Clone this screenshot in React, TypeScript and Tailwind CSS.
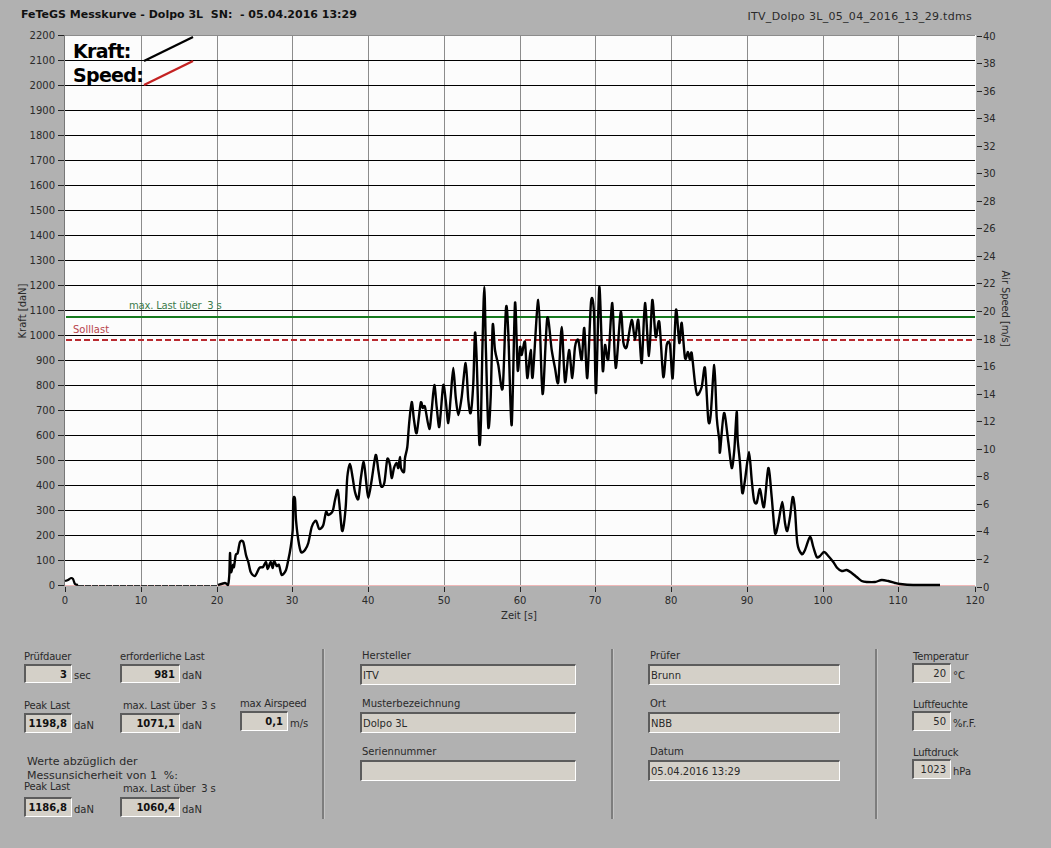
import React from "react";

const curveStart: [number, number][] = [[65,581],[68,580],[71,578],[73,579],[75,584],[78,585]];
const curve: [number, number][] = [
  [218,585],[225,583],[228,585],[229.3,575],[230,553],[231,572],[233,565],[234,567],[235.7,555],[237.7,553],[240,542],[243.3,542],[246,555],[248.3,562],[250.7,572],[255,576],[259.3,568],[263,567],[266,562],[267.7,569],[270.7,562],[272.7,568],[274,561],[276.7,566],[279,565],[281.7,575],[286,570],[288.3,560],[290.7,547],[292.7,530],[293.3,500],[295,499],[296,520],[298.3,540],[301,552],[305,550],[308.3,543],[311.7,527],[315,521],[316.7,522],[319.3,529],[323.3,525],[326,512],[328.3,515],[332.7,511],[335,500],[337.7,490],[339.3,503],[341.7,529],[343.3,528],[345.7,507],[347.3,477],[350,464],[352.7,478],[355,492],[358.3,499],[361,477],[363.7,462],[366,480],[368.3,498],[371.7,480],[375.7,455],[378.3,470],[381,486],[384.3,483],[387.3,459],[390,465],[391.7,478],[394,468],[396.7,463],[398.3,468],[400,457],[401,468],[404,472],[405,458],[407.3,447],[409,425],[411.7,402],[414,420],[416.7,433],[420.7,403],[422.7,408],[425,407],[429.3,429],[431.7,410],[434.3,385],[436.7,407],[439,427],[440.7,413],[443.3,385],[445.7,400],[448.3,423],[450.7,397],[453.3,368],[455.7,397],[458.3,415],[461.7,397],[465.7,363],[468.3,400],[470.7,413],
  [473.3,383],[475,333],[476.7,360],[479.3,443],[481,420],[482.3,353],[484.3,287],[486,353],[488.3,427],[490.7,397],[492.7,325],[495,350],[498.3,365],[502.7,388],[506,308],[508.3,333],[511.7,425],[515,303],[517.7,370],[520,347],[521.7,355],[525,342],[527.3,378],[530.7,350],[532.7,377],[538.3,300],[541.7,380],[543.3,390],[547.3,318],[551.7,350],[555,368],[558.3,382],[561.7,327],[565,382],[569,350],[572.3,378],[575,347],[578.3,340],[581.7,360],[584.3,328],[587.3,378],[591,302],[594,313],[596,393],[599.3,287],[602.7,370],[605,345],[608.3,359],[612.3,303],[615.7,368],[620.7,312],[623.3,342],[626.7,347],[631.7,320],[635,340],[638.3,320],[641.7,363],[645,303],[649,356],[652.3,300],[655.7,337],[659.3,322],[663.3,377],[666.7,345],[670,345],[672.7,378],[676,310],[679.3,343],[681.7,323],[685,358],[688,352],[690,360],[691.7,353],[695,383],[697.3,395],[701.7,387],[705,368],[708.3,420],[710.7,415],[714.3,365],[716.7,417],[719.3,440],[720,452],[724,413],[728.3,442],[731.7,468],[734.3,450],[736.7,412],[737.7,440],[740,463],[742.3,493],[745,480],[749,452],[751.7,480],[754,500],[756.7,503],[760,489],[764,507],[768.3,468],[771.7,497],[775,533],[778.3,523],[782.3,502],[785,523],[787.3,531],[790,517],[792.7,497],[795,510],[797.3,543],[801.7,554],[805,550],[810,537],[813.3,547],[816.7,557],[820,556],[824,552],[828.3,556],[833.3,562],[837.3,568],[841.7,571],[846.7,570],[851.7,573],[856.7,577],[861.7,581],[866.7,582],[875,582],[881.7,580],[888.3,581],[895,583],[900,584],[913,585],[940,585],
];

function smoothPath(pts: [number, number][]) {
  let d = `M${pts[0][0]} ${pts[0][1]}`;
  const k = 0.14;
  for (let i = 0; i < pts.length - 1; i++) {
    const p0 = pts[Math.max(0, i - 1)];
    const p1 = pts[i];
    const p2 = pts[i + 1];
    const p3 = pts[Math.min(pts.length - 1, i + 2)];
    const c1x = p1[0] + (p2[0] - p0[0]) * k;
    const c1y = p1[1] + (p2[1] - p0[1]) * k;
    const c2x = p2[0] - (p3[0] - p1[0]) * k;
    const c2y = p2[1] - (p3[1] - p1[1]) * k;
    d += `C${c1x.toFixed(1)} ${Math.min(585, c1y).toFixed(1)} ${c2x.toFixed(1)} ${Math.min(585, c2y).toFixed(1)} ${p2[0]} ${p2[1]}`;
  }
  return d;
}

const gridX = [141, 217, 292, 368, 444, 520, 595, 671, 747, 823, 898];
const hLines = Array.from({ length: 23 }, (_, i) => 35 + i * 25);
const rightTicks = Array.from({ length: 21 }, (_, i) => ({ v: 40 - i * 2, y: 35.5 + i * 27.55 }));
const xTicks = [65, ...gridX, 975];

function Chart() {
  return (
    <svg width={1051} height={621} viewBox="0 28 1051 621" className="block text-[10px] fill-[#2a2a2a]">
      <rect x={64} y={35} width={912} height={551} className="fill-[#fcfcfc]" />
      {gridX.map((x) => (
        <line key={x} x1={x + 0.5} x2={x + 0.5} y1={35} y2={586} className="stroke-[#8c8c8c]" strokeWidth={1} />
      ))}
      {hLines.map((y, i) => (
        <line key={y} x1={64} x2={975} y1={y + 0.5} y2={y + 0.5} className={i === 0 ? "stroke-[#8c8c8c]" : i === 22 ? "stroke-[#f0b8b8]" : "stroke-[#000000]"} strokeWidth={1} />
      ))}
      <line x1={64.5} x2={64.5} y1={35} y2={586} className="stroke-[#777777]" strokeWidth={1} />
      {hLines.map((y, i) => (
        <g key={y}>
          <line x1={58} x2={64} y1={y + 0.5} y2={y + 0.5} className="stroke-[#222222]" strokeWidth={1} />
          <text x={55} y={y + 4} textAnchor="end">{2200 - i * 100}</text>
        </g>
      ))}
      {rightTicks.map((t) => (
        <g key={t.v}>
          <line x1={977} x2={982} y1={Math.round(t.y) + 0.5} y2={Math.round(t.y) + 0.5} className="stroke-[#222222]" strokeWidth={1} />
          <text x={983} y={Math.round(t.y) + 4}>{t.v}</text>
        </g>
      ))}
      {xTicks.map((x, i) => (
        <g key={x}>
          <line x1={x + 0.5} x2={x + 0.5} y1={587} y2={592} className="stroke-[#222222]" strokeWidth={1} />
          <text x={x} y={604} textAnchor="middle">{i * 10}</text>
        </g>
      ))}
      <text x={519} y={619} textAnchor="middle">Zeit [s]</text>
      <text transform="translate(26 311) rotate(-90)" textAnchor="middle">Kraft [daN]</text>
      <text transform="translate(1002 308.5) rotate(90)" textAnchor="middle" className="tracking-[-0.1px]">Air Speed [m/s]</text>

      <line x1={66} x2={975} y1={317} y2={317} className="stroke-[#157a1e]" strokeWidth={2} />
      <line x1={66} x2={975} y1={340} y2={340} className="stroke-[#b92a30]" strokeWidth={2} strokeDasharray="6 3" />
      <text x={129} y={309} className="fill-[#3d7d4c] whitespace-pre tracking-[-0.2px]">max. Last über  3 s</text>
      <text x={73} y={333} className="fill-[#b8444c]">Solllast</text>
      <path d={smoothPath(curveStart)} fill="none" className="stroke-[#000000]" strokeWidth={2.2} strokeLinejoin="round" />
      <line x1={78} x2={218} y1={585.5} y2={585.5} className="stroke-[#333333]" strokeWidth={1} strokeDasharray="6 1" />
      <path d={smoothPath(curve)} fill="none" className="stroke-[#000000]" strokeWidth={2.4} strokeLinejoin="round" />

      <text x={73} y={58} className="text-[19px] font-bold fill-[#000000] tracking-[-0.7px]">Kraft:</text>
      <text x={73} y={82} className="text-[19px] font-bold fill-[#000000] tracking-[-0.7px]">Speed:</text>
      <line x1={144} y1={61} x2={193} y2={37} className="stroke-[#000000]" strokeWidth={2.4} />
      <line x1={144} y1={85} x2={193} y2={61} className="stroke-[#c42222]" strokeWidth={2.4} />
    </svg>
  );
}

const box = "border-t-2 border-l-2 border-b border-r border-t-[#5c5c5c] border-l-[#5c5c5c] border-b-[#ffffff] border-r-[#ffffff] bg-[#d4d0c8]";

function Num({ label, value, unit, w, labelClass = "", h = "h-[20px]", bold = true }: { label: string; value: string; unit?: string; w: string; labelClass?: string; h?: string; bold?: boolean }) {
  return (
    <div className="flex flex-col">
      <div className={`h-[14px] leading-[13px] whitespace-pre tracking-[-0.2px] ${labelClass}`}>{label}</div>
      <div className="flex items-end">
        <div className={`${box} ${w} ${h} flex items-center justify-end pr-[4px] ${bold ? "font-bold text-[#111111]" : ""}`}>{value}</div>
        {unit && <span className="ml-[2px] leading-[15px] whitespace-pre">{unit}</span>}
      </div>
    </div>
  );
}

function TextField({ label, value, w }: { label: string; value: string; w: string }) {
  return (
    <div className="flex flex-col">
      <div className="h-[15px] leading-[13px] pl-[2px]">{label}</div>
      <div className={`${box} ${w} h-[21px] flex items-center pl-[1px]`}>{value}</div>
    </div>
  );
}

function Sep() {
  return <div className="w-[3px] shrink-0 bg-[#7d7d7d] border-r border-r-[#c4c4c4]" />;
}

const env = "pl-[1px] translate-y-[1px]";

export default function App() {
  return (
    <div className="w-[1051px] h-[848px] overflow-hidden bg-[#b1b1b1] font-['DejaVu_Sans',sans-serif] text-[10px] text-[#2a2a2a]">
      <div className="h-[28px] flex justify-between pl-[21px] pr-[79px]">
        <div className="pt-[8px] font-bold text-[#111111] whitespace-pre leading-[14px] text-[11px]">FeTeGS Messkurve - Dolpo 3L  SN:  - 05.04.2016 13:29</div>
        <div className="pt-[10px] whitespace-pre leading-[14px] text-[11px] tracking-[0.3px]">ITV_Dolpo 3L_05_04_2016_13_29.tdms</div>
      </div>
      <Chart />
      <div className="flex h-[170px]">
        <div className="w-[322px] shrink-0 pl-[24px] pt-[1px] flex flex-col">
          <div className="flex">
            <div className="w-[96px]"><Num label="Prüfdauer" value="3" unit="sec" w="w-[48px]" h="h-[19px]" /></div>
            <Num label="erforderliche Last" value="981" unit="daN" w="w-[60px]" h="h-[19px]" />
          </div>
          <div className="flex items-end mt-[14px]">
            <div className="w-[96px]"><Num label="Peak Last" value="1198,8" unit="daN" w="w-[48px]" /></div>
            <div className="w-[120px]"><Num label="max. Last über  3 s" value="1071,1" unit="daN" w="w-[60px]" labelClass="pl-[3px]" /></div>
            <div className="mb-[2px]"><Num label="max Airspeed" value="0,1" unit="m/s" w="w-[48px]" /></div>
          </div>
          <div className="mt-[22px] pl-[3px] text-[11px] leading-[14px]">
            <div>Werte abzüglich der</div>
            <div className="whitespace-pre">Messunsicherheit von 1  %:</div>
          </div>
          <div className="flex">
            <div className="w-[96px]"><Num label="Peak Last" value="1186,8" unit="daN" w="w-[48px]" labelClass="-translate-y-[3px]" /></div>
            <Num label="max. Last über  3 s" value="1060,4" unit="daN" w="w-[60px]" labelClass="pl-[3px] -translate-y-[1px]" />
          </div>
        </div>
        <Sep />
        <div className="w-[286px] shrink-0 pl-[35px] flex flex-col gap-[12px]">
          <TextField label="Hersteller" value="ITV" w="w-[216px]" />
          <TextField label="Musterbezeichnung" value="Dolpo 3L" w="w-[216px]" />
          <TextField label="Seriennummer" value="" w="w-[216px]" />
        </div>
        <Sep />
        <div className="w-[261px] shrink-0 pl-[34px] flex flex-col gap-[12px]">
          <TextField label="Prüfer" value="Brunn" w="w-[192px]" />
          <TextField label="Ort" value="NBB" w="w-[192px]" />
          <TextField label="Datum" value="05.04.2016 13:29" w="w-[192px]" />
        </div>
        <Sep />
        <div className="pl-[34px] flex flex-col gap-[14px]">
          <Num label="Temperatur" value="20" unit="°C" w="w-[39px]" bold={false} labelClass={env} />
          <Num label="Luftfeuchte" value="50" unit="%r.F." w="w-[39px]" bold={false} labelClass={env} />
          <Num label="Luftdruck" value="1023" unit="hPa" w="w-[39px]" bold={false} labelClass={env} />
        </div>
      </div>
    </div>
  );
}
